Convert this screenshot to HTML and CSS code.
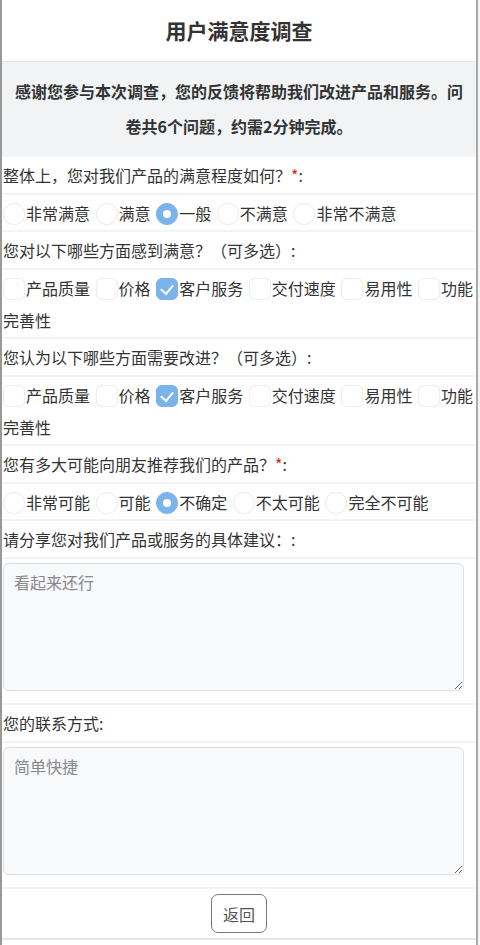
FILE: index.html
```html
<!DOCTYPE html>
<html>
<head>
  <meta charset="UTF-8">
  <meta name="viewport" content="width=device-width, initial-scale=1.0">
  <title>用户满意度调查</title>
  <link rel="stylesheet" href="styles.css">
</head>
<body>
  <div class="survey">
    <div class="header">
      <h1>用户满意度调查</h1>
    </div>

    <div class="intro">感谢您参与本次调查，您的反馈将帮助我们改进产品和服务。问卷共6个问题，约需2分钟完成。</div>

    <div class="row question">整体上，您对我们产品的满意程度如何？<span class="required">*</span>:</div>
    <div class="row options">
      <label class="option"><input type="radio" name="q1">非常满意</label>
      <label class="option"><input type="radio" name="q1">满意</label>
      <label class="option"><input type="radio" name="q1" checked>一般</label>
      <label class="option"><input type="radio" name="q1">不满意</label>
      <label class="option"><input type="radio" name="q1">非常不满意</label>
    </div>

    <div class="row question">您对以下哪些方面感到满意？（可多选）:</div>
    <div class="row options">
      <label class="option"><input type="checkbox">产品质量</label>
      <label class="option"><input type="checkbox">价格</label>
      <label class="option"><input type="checkbox" checked>客户服务</label>
      <label class="option"><input type="checkbox">交付速度</label>
      <label class="option"><input type="checkbox">易用性</label>
      <label class="option"><input type="checkbox">功能完善性</label>
    </div>

    <div class="row question">您认为以下哪些方面需要改进？（可多选）:</div>
    <div class="row options">
      <label class="option"><input type="checkbox">产品质量</label>
      <label class="option"><input type="checkbox">价格</label>
      <label class="option"><input type="checkbox" checked>客户服务</label>
      <label class="option"><input type="checkbox">交付速度</label>
      <label class="option"><input type="checkbox">易用性</label>
      <label class="option"><input type="checkbox">功能完善性</label>
    </div>

    <div class="row question">您有多大可能向朋友推荐我们的产品？<span class="required">*</span>:</div>
    <div class="row options">
      <label class="option"><input type="radio" name="q4">非常可能</label>
      <label class="option"><input type="radio" name="q4">可能</label>
      <label class="option"><input type="radio" name="q4" checked>不确定</label>
      <label class="option"><input type="radio" name="q4">不太可能</label>
      <label class="option"><input type="radio" name="q4">完全不可能</label>
    </div>

    <div class="row question">请分享您对我们产品或服务的具体建议：:</div>
    <div class="row field">
      <textarea placeholder="看起来还行"></textarea>
    </div>

    <div class="row question">您的联系方式:</div>
    <div class="row field">
      <textarea placeholder="简单快捷"></textarea>
    </div>

    <div class="row actions">
      <button class="back">返回</button>
    </div>
  </div>
</body>
</html>
```

FILE: styles.css
```css
body {
  margin: 0;
  background-color: #f5f5f5;
  font-family: "Noto Sans CJK SC", "Noto Sans", sans-serif;
  color: #333;
}

.survey {
  width: 474px;
  min-height: 945px;
  background-color: #fff;
  border-left: 2px solid #999;
  border-right: 2px solid #aaa;
}

.header {
  border-bottom: 1px solid #e4e4e4;
  text-align: center;
}

.header h1 {
  margin: 0;
  padding: 16px 0;
  font-size: 21px;
  line-height: 29px;
  color: #333;
}

.intro {
  background-color: #f2f3f5;
  padding: 12px 10px 11px;
  font-size: 16px;
  font-weight: bold;
  line-height: 35px;
  text-align: center;
  color: #333;
}

.row {
  border-top: 2px solid #f3f4f6;
  padding: 0 1px;
}

.question {
  font-size: 16px;
  line-height: 36px;
}

.required {
  color: #e02020;
}

.options {
  font-size: 16px;
  line-height: 32px;
  padding-top: 2px;
  padding-bottom: 1px;
}

.option {
  margin-right: 2px;
  cursor: pointer;
}

.option input {
  -webkit-appearance: none;
  appearance: none;
  display: inline-block;
  vertical-align: middle;
  position: relative;
  top: -2px;
  width: 22px;
  height: 22px;
  margin: 0 1px 0 0;
  background-color: #fff;
  border: 1px solid #eee;
  box-shadow: 0 0 1px rgba(0,0,0,0.08);
}

.option input[type="radio"] {
  border-radius: 50%;
}

.option input[type="checkbox"] {
  border-radius: 6px;
}

.option input:checked {
  background-color: #7ab4ea;
  border-color: #7ab4ea;
}

.option input[type="radio"]:checked:after {
  content: "";
  position: absolute;
  left: 6px;
  top: 6px;
  width: 8px;
  height: 8px;
  border-radius: 50%;
  background-color: #fff;
}

.option input[type="checkbox"]:checked:after {
  content: "";
  position: absolute;
  left: 6px;
  top: 3px;
  width: 6px;
  height: 10px;
  border-right: 2px solid #fff;
  border-bottom: 2px solid #fff;
  transform: rotate(40deg);
}

.field {
  padding: 4px 0 12px 1px;
}

textarea {
  display: block;
  box-sizing: border-box;
  width: 461px;
  height: 128px;
  padding: 6px 10px;
  background-color: #f8f9fb;
  border: 1px solid #dcdfe3;
  border-radius: 6px;
  font-family: inherit;
  font-size: 16px;
  color: #333;
}

textarea::placeholder {
  color: #888;
}

.actions {
  text-align: center;
  padding: 5px 0 5px;
  border-bottom: 2px solid #e8e9ec;
}

.back {
  width: 56px;
  height: 39px;
  background-color: #fff;
  border: 1px solid #777;
  border-radius: 7px;
  font-family: inherit;
  font-size: 16px;
  color: #555;
  cursor: pointer;
}
```
